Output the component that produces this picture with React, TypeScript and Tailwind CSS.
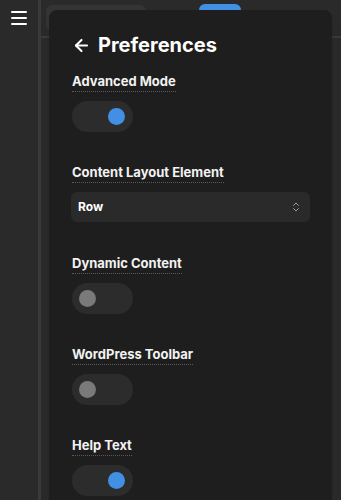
import { ArrowLeft, ChevronsUpDown } from 'lucide-react'

function Label({ text }: { text: string }) {
  return (
    <div className="flex">
      <span className="text-[13px] leading-[18px] font-bold text-[#f2f2f2] border-b border-dotted border-[#5a5a5a] pb-px">
        {text}
      </span>
    </div>
  )
}

function Toggle({ on }: { on: boolean }) {
  return (
    <div className={`w-[61px] h-[31px] rounded-full bg-[#2c2c2c] flex items-center pl-[7px] pr-[8px] ${on ? 'justify-end' : 'justify-start'}`}>
      <div className={`w-[17px] h-[17px] rounded-full ${on ? 'bg-[#4290e3]' : 'bg-[#7a7a7a]'}`}></div>
    </div>
  )
}

export default function App() {
  return (
    <div className="flex h-[500px] w-[341px] overflow-hidden bg-[#2a2a2a]" style={{ fontFamily: 'Inter, "Noto Sans", sans-serif' }}>
      {/* Sidebar */}
      <div className="w-[41px] shrink-0 border-r-[3px] border-[#3a3a3a] bg-[#2a2a2a] pt-[11px] pl-[11px]">
        <div className="w-[16px] space-y-[4px]">
          <div className="h-[2px] bg-white rounded-sm"></div>
          <div className="h-[2px] bg-white rounded-sm"></div>
          <div className="h-[2px] bg-white rounded-sm"></div>
        </div>
      </div>

      {/* Main area */}
      <div className="relative flex-1">
        <div className="h-[38px] border-b-[2px] border-[#3a3a3a] bg-[#2a2a2a] flex items-start">
          <div className="ml-[5px] mt-[5px] w-[100px] h-[26px] rounded-md bg-[#343434]"></div>
          <div className="ml-[53px] mt-[4px] w-[42px] h-[10px] rounded-t-md bg-[#4290e3]"></div>
        </div>

        {/* Preferences panel */}
        <div className="absolute left-[8px] top-[10px] w-[283px] bottom-0 rounded-t-lg bg-[#1e1e1e] pl-[23px] pr-[22px] pt-[23px] shadow-lg">
          <div className="flex items-center gap-[7px] text-white h-[24px]">
            <ArrowLeft size={19} strokeWidth={2.6} />
            <span className="text-[20px] font-bold leading-none">Preferences</span>
          </div>

          <div className="mt-[15px]">
            <Label text="Advanced Mode" />
            <div className="mt-[9px]">
              <Toggle on={true} />
            </div>
          </div>

          <div className="mt-[31px]">
            <Label text="Content Layout Element" />
            <div className="mt-[9px] h-[30px] w-[239px] -ml-px rounded-md bg-[#2a2a2a] flex items-center justify-between pl-[7px] pr-[8px]">
              <span className="text-[12px] font-bold text-white">Row</span>
              <ChevronsUpDown size={12} strokeWidth={2} className="text-[#9a9a9a]" />
            </div>
          </div>

          <div className="mt-[32px]">
            <Label text="Dynamic Content" />
            <div className="mt-[9px]">
              <Toggle on={false} />
            </div>
          </div>

          <div className="mt-[31px]">
            <Label text="WordPress Toolbar" />
            <div className="mt-[9px]">
              <Toggle on={false} />
            </div>
          </div>

          <div className="mt-[31px]">
            <Label text="Help Text" />
            <div className="mt-[9px]">
              <Toggle on={true} />
            </div>
          </div>
        </div>
      </div>
    </div>
  )
}
